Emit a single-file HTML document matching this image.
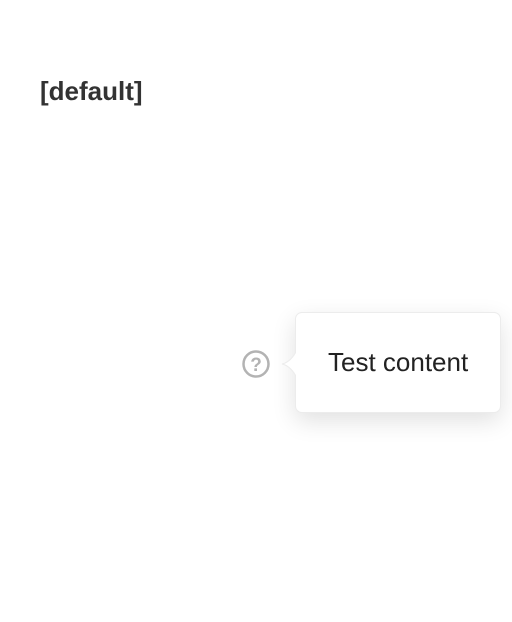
<!DOCTYPE html>
<html><head><style>
body{margin:0;width:512px;height:622px;background:#fff;font-family:"Liberation Sans",sans-serif;position:relative;overflow:hidden}
h1{position:absolute;left:40px;top:76px;margin:0;font-size:26px;font-weight:bold;color:#333;line-height:30px}
.tip{position:absolute;left:295px;top:312px;width:206px;height:101px;box-sizing:border-box;background:#fff;border:1px solid #ececec;border-radius:7px;box-shadow:0 8px 24px rgba(0,0,0,.12)}
.tip span{position:absolute;left:32px;top:34px;font-size:26px;color:#222;line-height:30px}
</style></head><body>
<h1>[default]</h1>
<svg style="position:absolute;left:240px;top:346px" width="60" height="36" viewBox="240 346 60 36">
<circle cx="256" cy="364" r="12.5" fill="none" stroke="#b3b3b3" stroke-width="2.5"/>
<text x="256" y="371" text-anchor="middle" font-family="Liberation Sans" font-weight="bold" font-size="19" fill="#b3b3b3">?</text>
</svg>
<div class="tip"><span>Test content</span></div>
<svg style="position:absolute;left:280px;top:346px" width="18" height="36" viewBox="280 346 18 36">
<path d="M297 350 Q291 362 282 364 Q291 366 297 378 Z" fill="#fff" stroke="#ececec" stroke-width="1"/>
<rect x="296" y="348" width="3" height="32" fill="#fff"/>
</svg>
</body></html>
